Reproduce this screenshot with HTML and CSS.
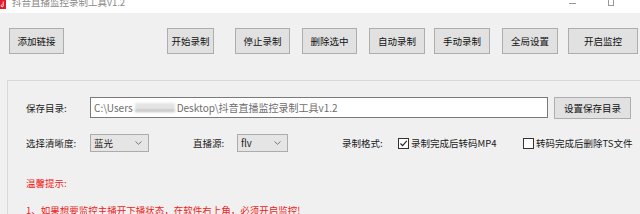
FILE: index.html
```html
<!DOCTYPE html>
<html lang="zh-CN">
<head>
<meta charset="utf-8">
<title>抖音直播监控录制工具v1.2</title>
<link rel="stylesheet" href="styles.css">
</head>
<body>
<div class="titlebar">
  <div class="app-icon"><svg width="6" height="9" viewBox="0 0 6 9"><rect width="6" height="9" fill="#e8192c"/><path d="M3.2 1.5v4.3a1 1 0 1 1-0.8-1" stroke="#fff" stroke-width="0.9" fill="none"/></svg></div>
  <div class="title">抖音直播监控录制工具v1.2</div>
  <div class="win-ctrls">
    <span class="wc-min"></span>
    <span class="wc-max"></span>
  </div>
</div>
<div class="toolbar">
  <button class="btn btn-add">添加链接</button>
  <button class="btn btn-start">开始录制</button>
  <button class="btn btn-stop">停止录制</button>
  <button class="btn btn-del">删除选中</button>
  <button class="btn btn-auto">自动录制</button>
  <button class="btn btn-manual">手动录制</button>
  <button class="btn btn-global">全局设置</button>
  <button class="btn btn-monitor">开启监控</button>
</div>
<div class="group">
  <div class="row row-path">
    <span class="lbl">保存目录:</span>
    <div class="path-input"><span>C:\Users</span><span class="blur"></span><span>Desktop\抖音直播监控录制工具v1.2</span></div>
    <button class="btn btn-setdir">设置保存目录</button>
  </div>
  <div class="row row-opts">
    <span class="lbl">选择清晰度:</span>
    <div class="select sel-quality"><span>蓝光</span><svg class="chev" width="7" height="4" viewBox="0 0 7 4"><path d="M0.5 0.5L3.5 3.3L6.5 0.5" stroke="#777" fill="none"/></svg></div>
    <span class="lbl lbl-src">直播源:</span>
    <div class="select sel-src"><span>flv</span><svg class="chev" width="7" height="4" viewBox="0 0 7 4"><path d="M0.5 0.5L3.5 3.3L6.5 0.5" stroke="#777" fill="none"/></svg></div>
    <span class="lbl lbl-fmt">录制格式:</span>
    <label class="chk chk-mp4"><span class="box"><svg width="9" height="9" viewBox="0 0 9 9"><path d="M1.5 4.5L3.6 6.7L7.8 1.8" stroke="#222" stroke-width="1.1" fill="none"/></svg></span>录制完成后转码MP4</label>
    <label class="chk"><span class="box"></span>转码完成后删除TS文件</label>
  </div>
  <div class="tips-title">温馨提示:</div>
  <div class="tip">1、如果想要监控主播开下播状态，在软件右上角，必须开启监控!</div>
</div>
</body>
</html>
```
FILE: styles.css
```css
html, body {
  margin: 0;
  padding: 0;
}
body {
  width: 640px;
  height: 214px;
  overflow: hidden;
  background: #f0f0f0;
  font-family: "Noto Sans CJK SC", "Noto Sans", sans-serif;
  font-size: 9.5px;
  color: #1a1a1a;
}
.titlebar {
  height: 13px;
  background: #fff;
  display: flex;
  align-items: flex-start;
  overflow: hidden;
}
.app-icon {
  width: 6px;
  height: 9px;
  line-height: 0;
}
.title {
  margin-left: 6px;
  margin-top: -4px;
  font-size: 9.5px;
  line-height: 12px;
  color: #8a8a8a;
}
.win-ctrls {
  margin-left: auto;
  display: flex;
  align-items: flex-start;
}
.wc-min {
  width: 7px;
  height: 1px;
  background: #999;
  margin-top: 3px;
}
.wc-max {
  width: 4px;
  height: 5px;
  border: 1px solid #999;
  border-top: none;
  margin-left: 32px;
  margin-right: 26px;
}
.toolbar {
  display: flex;
  padding: 15px 0 0 9px;
  height: 26px;
}
.btn {
  font-family: inherit;
  font-size: 9.5px;
  color: #111;
  background: #e1e1e1;
  border: 1px solid #adadad;
  border-radius: 0;
  padding: 0;
  height: 26px;
  margin: 0;
}
.btn-add { width: 55px; }
.btn-start { width: 47px; margin-left: 103px; }
.btn-stop { width: 55px; margin-left: 21px; }
.btn-del { width: 55px; margin-left: 12px; }
.btn-auto { width: 56px; margin-left: 12px; }
.btn-manual { width: 56px; margin-left: 9px; }
.btn-global { width: 56px; margin-left: 12px; }
.btn-monitor { width: 70px; margin-left: 10px; }
.group {
  margin: 26px 0 0 7px;
  border-top: 1px solid #d9d9d9;
  border-left: 1px solid #d9d9d9;
  padding: 16px 0 0 18px;
}
.row {
  display: flex;
  align-items: center;
}
.row-path { height: 22px; }
.lbl {
  width: 64px;
  flex: none;
  white-space: nowrap;
}
.path-input {
  width: 453px;
  height: 19px;
  border: 1px solid #7a7a7a;
  background: #fff;
  display: flex;
  align-items: center;
  padding-left: 3px;
  box-sizing: content-box;
  color: #6d6d6d;
  white-space: nowrap;
  overflow: hidden;
  font-size: 10px;
  margin-top: -1px;
}
.path-input .blur {
  width: 40px;
  height: 9px;
  margin: 0 2px;
  background: linear-gradient(to bottom, #e4e4e4 0, #e4e4e4 70%, #b5b5b5 80%, #c8c8c8 100%);
  filter: blur(1px);
  flex: none;
}
.btn-setdir {
  width: 77px;
  height: 22px;
  margin-left: 6px;
}
.row-opts {
  height: 18px;
  margin-top: 15px;
}
.select {
  height: 16px;
  border: 1px solid #acacac;
  background: #e5e5e5;
  display: flex;
  align-items: center;
  padding-left: 3px;
  box-sizing: content-box;
  flex: none;
}
.select .chev {
  margin-left: auto;
  margin-right: 6px;
}
.sel-quality { width: 54px; }
.sel-src { width: 46px; }
.lbl-src {
  margin-left: 44px;
  width: 44px;
}
.lbl-fmt {
  margin-left: 54px;
  width: 56px;
}
.chk {
  display: flex;
  align-items: center;
  white-space: nowrap;
}
.chk-mp4 { width: 125px; }
.box {
  width: 9px;
  height: 9px;
  border: 1px solid #333;
  background: #fff;
  margin-right: 2px;
  line-height: 0;
  flex: none;
}
.tips-title {
  color: #f01919;
  margin-top: 25px;
  line-height: 12px;
}
.tip {
  color: #f01919;
  margin-top: 15px;
  line-height: 12px;
  white-space: nowrap;
}
```
